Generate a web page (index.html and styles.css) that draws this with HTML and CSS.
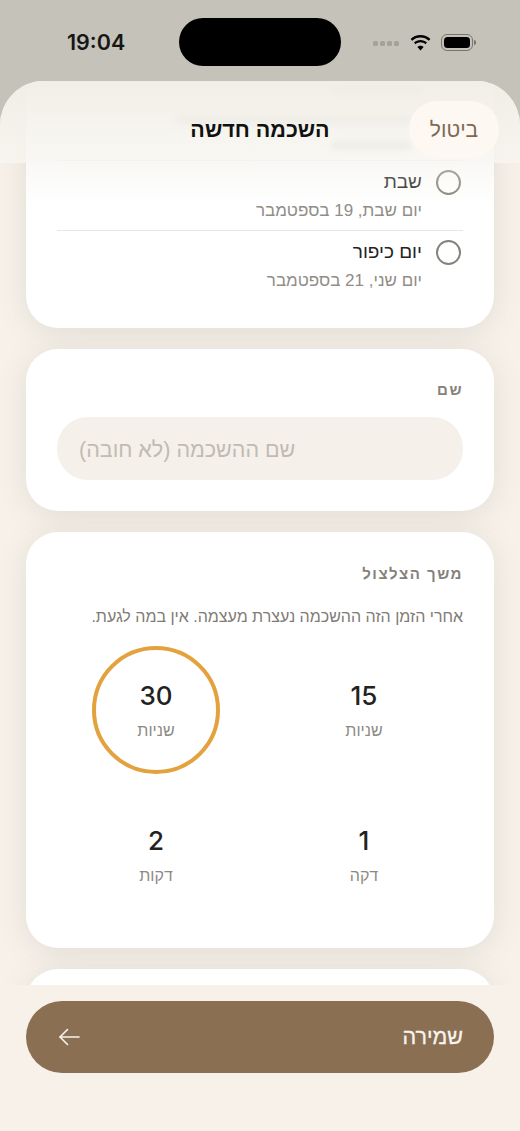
FILE: index.html
```html
<!DOCTYPE html>
<html lang="he" dir="rtl">

<head>
    <meta charset="UTF-8">
    <meta name="viewport" content="width=device-width, initial-scale=1.0">
    <title>השכמה חדשה</title>
    <link rel="stylesheet" href="styles.css">
</head>

<body>
    <div class="screen">
        <!-- Status bar keeps LTR order like the device -->
        <div class="status-bar" dir="ltr">
            <span class="clock">19:04</span>
            <div class="island"></div>
            <div class="status-icons">
                <div class="signal"><i></i><i></i><i></i><i></i></div>
                <svg class="wifi" width="23" height="17" viewBox="0 0 23 17">
                    <path d="M11.5 3.4c3.2 0 6.1 1.2 8.3 3.3l1.6-1.7C18.8 2.400 15.300.9 11.500.9S4.200 2.400 1.600 5l1.600 1.700c2.200-2.100 5.100-3.300 8.300-3.300z" />
                    <path d="M11.500 8.300c1.900 0 3.600.7 4.900 1.900l1.600-1.700c-1.700-1.600-4-2.600-6.500-2.600s-4.800 1-6.500 2.600l1.600 1.700c1.300-1.200 3-1.900 4.900-1.900z" />
                    <path d="M11.500 16.400l3.100-3.500c-.8-.7-1.900-1.200-3.100-1.200s-2.300.5-3.100 1.200z" />
                </svg>
                <div class="battery"><div class="battery-fill"></div></div>
                <div class="battery-cap"></div>
            </div>
        </div>

        <div class="sheet">
            <div class="sheet-content">
                <section class="card card-holidays">
                    <div class="row row-hidden">
                        <div class="smudge smudge-a"></div>
                        <div class="smudge smudge-b"></div>
                        <div class="smudge smudge-c"></div>
                    </div>
                    <div class="row">
                        <span class="radio"></span>
                        <div class="row-text">
                            <div class="row-name">שבת</div>
                            <div class="row-date">יום שבת, 19 בספטמבר</div>
                        </div>
                    </div>
                    <div class="row">
                        <span class="radio"></span>
                        <div class="row-text">
                            <div class="row-name">יום כיפור</div>
                            <div class="row-date">יום שני, 21 בספטמבר</div>
                        </div>
                    </div>
                </section>

                <section class="card card-name">
                    <h3 class="card-title">שם</h3>
                    <input class="name-input" type="text" placeholder="שם ההשכמה (לא חובה)">
                </section>

                <section class="card card-duration">
                    <h3 class="card-title">משך הצלצול</h3>
                    <p class="card-desc">אחרי הזמן הזה ההשכמה נעצרת מעצמה. אין במה לגעת.</p>
                    <div class="duration-grid">
                        <div class="duration">
                            <div class="duration-num">15</div>
                            <div class="duration-unit">שניות</div>
                        </div>
                        <div class="duration selected">
                            <div class="duration-num">30</div>
                            <div class="duration-unit">שניות</div>
                        </div>
                        <div class="duration">
                            <div class="duration-num">1</div>
                            <div class="duration-unit">דקה</div>
                        </div>
                        <div class="duration">
                            <div class="duration-num">2</div>
                            <div class="duration-unit">דקות</div>
                        </div>
                    </div>
                </section>

                <section class="card card-next"></section>
            </div>

            <!-- Floating header over the scrolled content -->
            <header class="sheet-header">
                <h2 class="sheet-title">השכמה חדשה</h2>
                <button class="cancel-btn">ביטול</button>
            </header>

            <footer class="sheet-footer">
                <button class="save-btn">
                    <span>שמירה</span>
                    <svg width="24" height="20" viewBox="0 0 24 20" fill="none" stroke="#f9f4ee" stroke-width="1.6" stroke-linecap="round" stroke-linejoin="round">
                        <path d="M22 10H3" />
                        <path d="M10.500 2.500L3 10l7.500 7.500" />
                    </svg>
                </button>
            </footer>
        </div>
    </div>
</body>

</html>
```

FILE: styles.css
```css
* {
    box-sizing: border-box;
}

body {
    margin: 0;
    font-family: "Liberation Sans", Arial, sans-serif;
    background-color: #c5c2ba;
}

.screen {
    width: 520px;
    height: 1131px;
    overflow: hidden;
    display: flex;
    flex-direction: column;
    background-color: #c5c2ba;
}

/* Status bar */
.status-bar {
    height: 81px;
    flex: none;
    display: flex;
    align-items: flex-start;
    padding: 18px 0 0 67px;
}

.clock {
    width: 112px;
    flex: none;
    margin-top: 12px;
    font-family: Inter, sans-serif;
    font-size: 21.500px;
    font-weight: 600;
    line-height: 25px;
    color: #161616;
}

.island {
    width: 162px;
    height: 48px;
    flex: none;
    border-radius: 24px;
    background-color: #000;
}

.status-icons {
    display: flex;
    align-items: center;
    margin-left: 32px;
    height: 48px;
}

.signal {
    display: flex;
    gap: 2px;
    margin-right: 10px;
    margin-top: 2px;
}

.signal i {
    width: 5px;
    height: 5px;
    border-radius: 1.500px;
    background-color: #a5a29b;
}

.wifi {
    fill: #000;
    margin-right: 9px;
}

.battery {
    width: 32px;
    height: 17px;
    padding: 2px;
    border: 1px solid #77756f;
    border-radius: 6px;
}

.battery-fill {
    height: 100%;
    border-radius: 3.500px;
    background-color: #000;
}

.battery-cap {
    width: 2px;
    height: 5px;
    margin-left: 1px;
    border-radius: 0 2px 2px 0;
    background-color: #77756f;
}

/* Sheet */
.sheet {
    position: relative;
    flex: 1;
    overflow: hidden;
    border-radius: 44px 44px 0 0;
    background-color: #f7f1ea;
}

.sheet-content {
    display: flex;
    flex-direction: column;
    gap: 21px;
    padding: 0 26px;
}

.card {
    flex: none;
    padding: 0 31px;
    border-radius: 32px;
    background-color: #fff;
    box-shadow: 0 4px 30px rgba(80, 90, 70, 0.13);
}

/* Holiday list */
.card-holidays {
    height: 247px;
    padding-top: 10px;
    border-radius: 0 0 32px 32px;
}

.row {
    height: 70px;
    display: flex;
    padding-top: 8px;
    border-bottom: 1px solid #e8e6e2;
}

.row:last-child {
    border-bottom: none;
}

.row-hidden {
    position: relative;
    height: 70px;
}

/* Unreadable text blurred under the header */
.smudge {
    position: absolute;
    height: 9px;
    border-radius: 4px;
    background-color: rgba(70, 64, 56, 0.28);
    filter: blur(3px);
}

.smudge-a {
    top: -6px;
    right: 40px;
    width: 90px;
}

.smudge-b {
    top: 24px;
    right: 48px;
    width: 240px;
}

.smudge-c {
    top: 50px;
    right: 52px;
    width: 80px;
}

.radio {
    flex: none;
    width: 25px;
    height: 25px;
    margin: 1px 2px 0 14px;
    border: 2px solid #85817b;
    border-radius: 50%;
}

.row-name {
    font-size: 19px;
    line-height: 26px;
    color: #222;
}

.row-date {
    margin-top: 6px;
    font-size: 17px;
    line-height: 20px;
    color: #918d87;
}

/* Name field */
.card-name {
    height: 162px;
    padding-top: 31px;
}

.card-title {
    margin: 0;
    font-size: 15px;
    font-weight: 700;
    line-height: 20px;
    letter-spacing: 1.500px;
    color: #85817a;
}

.name-input {
    display: block;
    width: 100%;
    height: 63px;
    margin-top: 17px;
    padding: 3px 22px 0;
    border: none;
    border-radius: 31px;
    background-color: #f5f0e9;
    font-family: "Liberation Sans", Arial, sans-serif;
    font-size: 21.500px;
    text-align: left;
}

.name-input::placeholder {
    color: #c0bbb3;
    opacity: 1;
}

/* Ring duration */
.card-duration {
    height: 416px;
    padding-top: 32px;
}

.card-desc {
    margin: 23px 0 0;
    font-size: 16px;
    line-height: 20px;
    color: #7f7b75;
}

.duration-grid {
    display: grid;
    grid-template-columns: 198px 198px;
    column-gap: 10px;
    row-gap: 17px;
    margin-top: 19px;
}

.duration {
    width: 128px;
    height: 128px;
    justify-self: center;
    padding-top: 35px;
    border-radius: 50%;
    text-align: center;
}

.duration.selected {
    padding-top: 31px;
    border: 4px solid #e3a23e;
}

.duration-num {
    font-family: Inter, sans-serif;
    font-size: 26px;
    font-weight: 500;
    line-height: 30px;
    color: #222;
}

.duration-unit {
    margin-top: 10px;
    font-size: 16px;
    line-height: 20px;
    color: #8d8983;
}

.card-next {
    height: 120px;
}

/* Header */
.sheet-header {
    position: absolute;
    top: 0;
    left: 0;
    right: 0;
    height: 82px;
    background: linear-gradient(to bottom, rgba(241, 238, 230, 0.98) 0, rgba(248, 246, 241, 0.8) 100%);
}

/* Soft fade of the header over the first card */
.sheet-header::after {
    content: "";
    position: absolute;
    top: 82px;
    left: 26px;
    right: 26px;
    height: 42px;
    background: linear-gradient(to bottom, rgba(240, 238, 232, 0.4), rgba(240, 238, 232, 0));
}

.sheet-title {
    position: absolute;
    top: 36px;
    left: 0;
    right: 0;
    margin: 0;
    font-size: 21.500px;
    font-weight: 700;
    line-height: 26px;
    text-align: center;
    color: #111;
}

.cancel-btn {
    position: absolute;
    top: 20px;
    right: 21px;
    width: 90px;
    height: 57px;
    border: none;
    border-radius: 29px;
    background-color: #fdf8f1;
    font-family: "Liberation Sans", Arial, sans-serif;
    font-size: 21px;
    color: #7d6a55;
}

/* Footer */
.sheet-footer {
    position: absolute;
    left: 0;
    right: 0;
    bottom: 0;
    height: 146px;
    padding: 16px 26px 0;
    background-color: #f7f1ea;
}

.save-btn {
    width: 100%;
    height: 72px;
    display: flex;
    align-items: center;
    justify-content: space-between;
    padding: 0 31px;
    border: none;
    border-radius: 36px;
    background-color: #8a6f52;
    font-family: "Liberation Sans", Arial, sans-serif;
    font-size: 21.500px;
    -webkit-text-stroke: 0.300px #f9f4ee;
    color: #f9f4ee;
}
```
